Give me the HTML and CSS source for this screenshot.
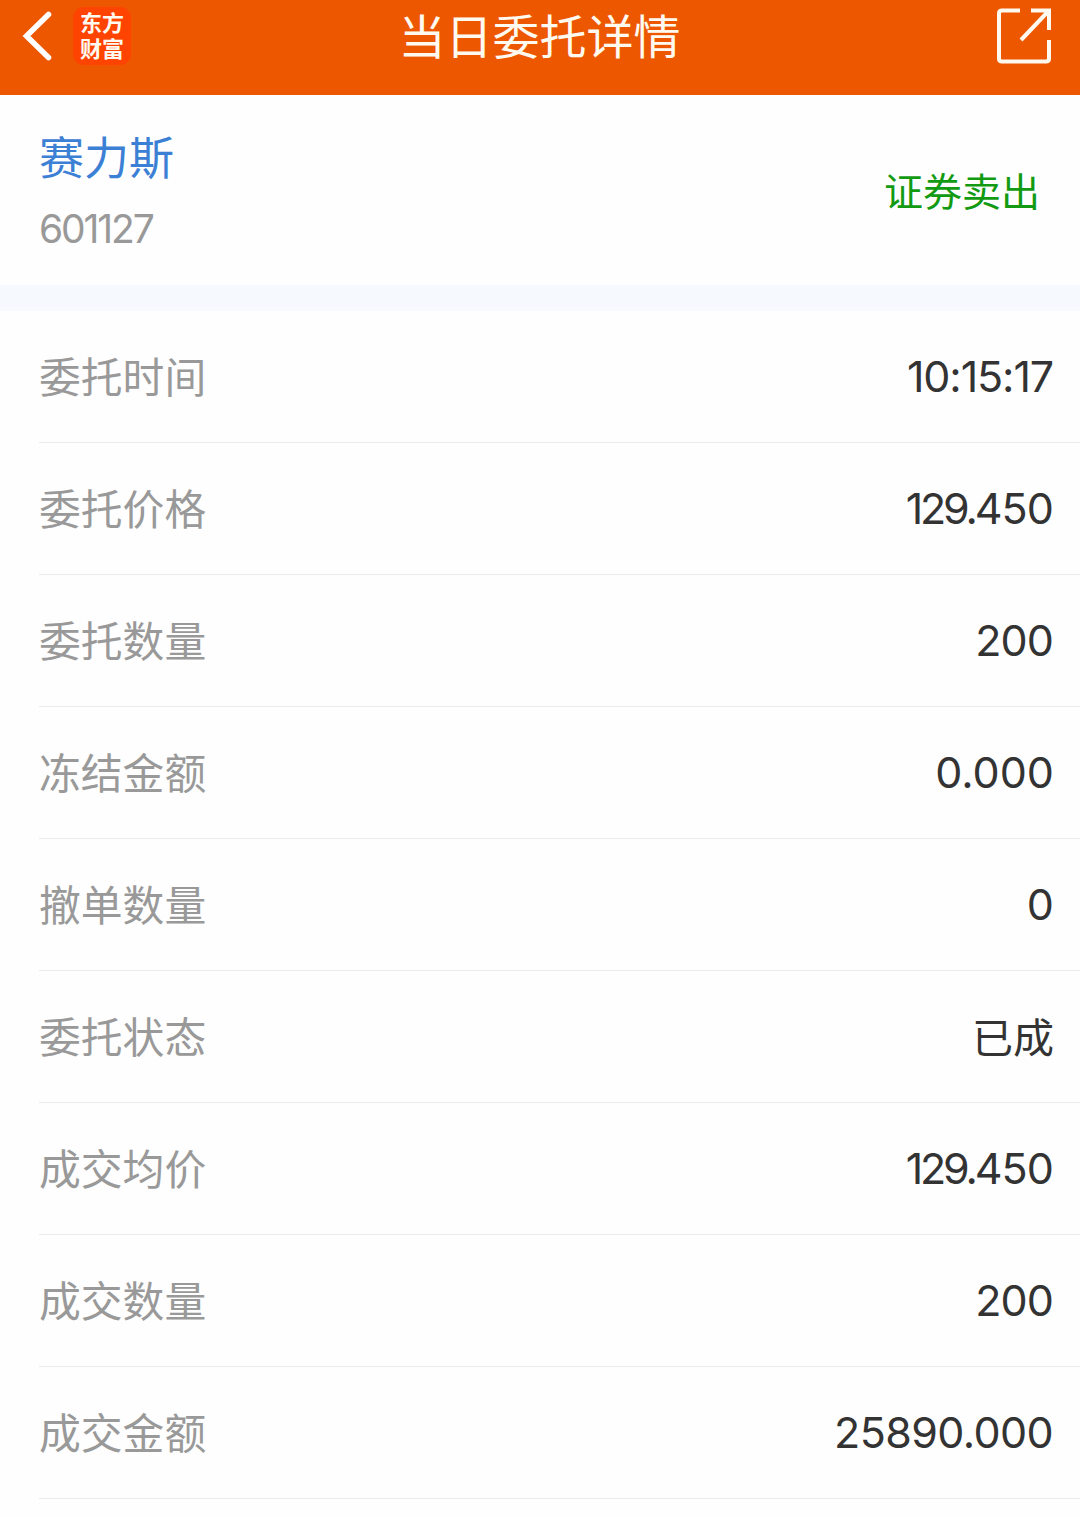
FILE: index.html
```html
<!DOCTYPE html>
<html lang="zh-CN">
<head>
<meta charset="utf-8">
<title>当日委托详情</title>
<link rel="stylesheet" href="styles.css">
</head>
<body>
<header class="topbar">
  <div class="topbar-left">
    <svg class="back" width="30" height="50" viewBox="0 0 30 50" fill="none" stroke="currentColor" stroke-width="5.500" stroke-linecap="round" stroke-linejoin="miter"><path d="M26.500 3.500 4.500 25 26.500 46.500"/></svg>
    <div class="logo"><span>东方</span><span>财富</span></div>
  </div>
  <h1 class="title">当日委托详情</h1>
  <svg class="share" width="58" height="58" viewBox="0 0 58 58" fill="none" stroke="currentColor" stroke-width="4"><path d="M25 3.500H7Q4 3.500 4 6.500V51.500Q4 54.500 7 54.500H51Q54 54.500 54 51.500V33"/><path d="M36 3.500H54V23"/><path d="M54 3.500 26 33"/></svg>
</header>
<section class="stock">
  <div class="stock-id">
    <div class="stock-name">赛力斯</div>
    <div class="stock-code">601127</div>
  </div>
  <div class="side">证券卖出</div>
</section>
<main class="rows">
  <div class="row"><span class="label">委托时间</span><span class="value time">10:15:17</span></div>
  <div class="row"><span class="label">委托价格</span><span class="value price"><span class="whole">129.</span>450</span></div>
  <div class="row"><span class="label">委托数量</span><span class="value count">200</span></div>
  <div class="row"><span class="label">冻结金额</span><span class="value">0.000</span></div>
  <div class="row"><span class="label">撤单数量</span><span class="value">0</span></div>
  <div class="row"><span class="label">委托状态</span><span class="value status">已成</span></div>
  <div class="row"><span class="label">成交均价</span><span class="value price"><span class="whole">129.</span>450</span></div>
  <div class="row"><span class="label">成交数量</span><span class="value count">200</span></div>
  <div class="row"><span class="label">成交金额</span><span class="value amount">25890.000</span></div>
</main>
</body>
</html>
```
FILE: styles.css
```css
* { box-sizing: border-box; }
body {
  margin: 0;
  height: 1516px;
  overflow: hidden;
  background: #fefefe;
  color: #333;
  font-family: Inter, "Noto Sans CJK SC", sans-serif;
}
.topbar {
  display: grid;
  grid-template-columns: 1fr auto 1fr;
  align-items: center;
  height: 95px;
  padding: 0 27px 23px 22px;
  background: #ed5700;
  color: #fffaf0;
}
.topbar-left { display: flex; align-items: center; gap: 21px; }
.back { color: #fff; }
.logo {
  display: flex;
  flex-direction: column;
  align-items: center;
  justify-content: center;
  width: 58px;
  height: 58px;
  border-radius: 11px;
  background: #ff4300;
  font-size: 22px;
  font-weight: 700;
  line-height: 26px;
}
.title {
  margin: 0;
  padding: 2px 0 0 4px;
  font-size: 47px;
  font-weight: 400;
  line-height: 70px;
}
.share { justify-self: end; }
.stock {
  display: flex;
  justify-content: space-between;
  align-items: center;
  height: 216px;
  padding: 8px 40px 0 39px;
  border-bottom: 26px solid #f6faff;
}
.stock-name { color: #3c80d5; font-size: 45px; line-height: 66px; }
.stock-code {
  margin-top: 4px;
  color: #999;
  font-size: 39px;
  line-height: 66px;
  letter-spacing: -2.1px;
}
.side { margin-bottom: 4px; color: #129b12; font-size: 39px; line-height: 60px; }
.row {
  display: flex;
  justify-content: space-between;
  align-items: center;
  height: 132px;
  margin-left: 39px;
  padding-right: 26px;
  border-bottom: 1px solid #ebebeb;
}
.label { padding-top: 2px; color: #999; font-size: 41.8px; line-height: 60px; }
.value { padding-bottom: 1px; font-size: 43px; line-height: 60px; }
.status { padding: 2px 0 0; font-size: 41px; }
.time { padding-right: 1px; letter-spacing: -1.1px; }
.price { padding-right: 1px; letter-spacing: -0.9px; }
.whole { letter-spacing: -3.2px; }
.count { padding-right: 1px; letter-spacing: -0.9px; }
.amount { padding-right: 1px; letter-spacing: -0.6px; }
```
